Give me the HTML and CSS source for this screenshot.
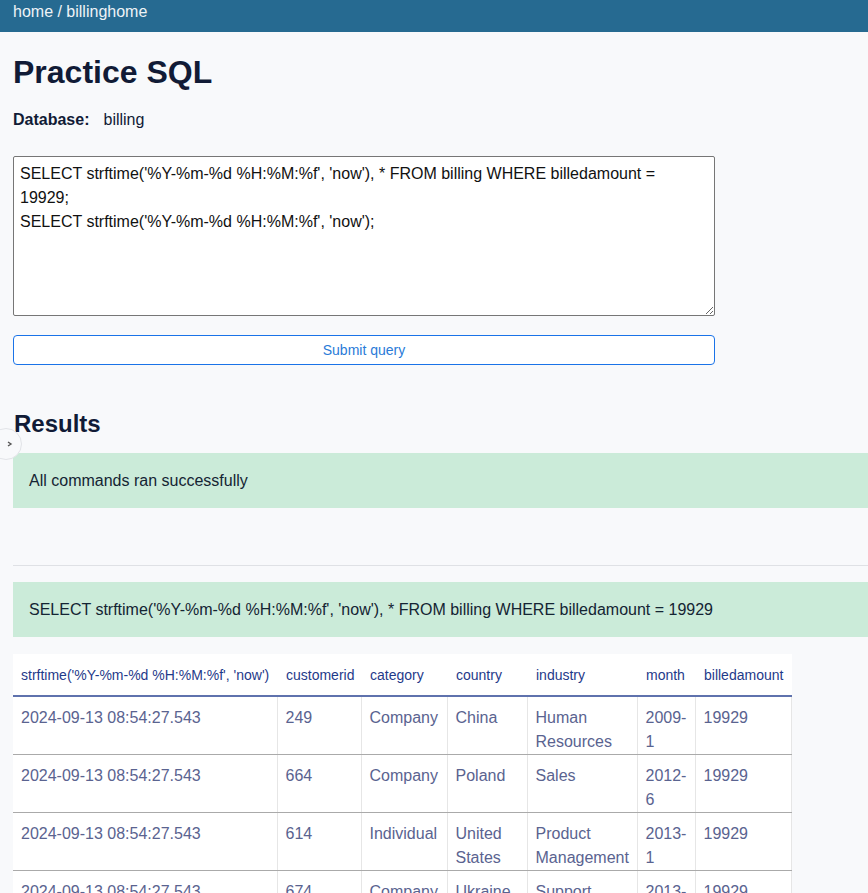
FILE: index.html
```html
<!DOCTYPE html>
<html>
<head>
<meta charset="utf-8">
<link rel="stylesheet" href="styles.css">
</head>
<body>
<div class="topbar">home / billinghome</div>
<button class="side-toggle" aria-label="toggle">
<svg width="6" height="6" viewBox="0 0 6 6"><path d="M1 1 L4 3 L1 5" fill="none" stroke="#555" stroke-width="1.4"/></svg>
</button>
<main class="main">
<h1 class="title">Practice SQL</h1>
<div class="dbline"><span class="dblabel">Database:</span><span class="dbname">billing</span></div>
<textarea class="editor">SELECT strftime('%Y-%m-%d %H:%M:%f', 'now'), * FROM billing WHERE billedamount = 19929;
SELECT strftime('%Y-%m-%d %H:%M:%f', 'now');</textarea>
<button class="submit">Submit query</button>
<h2 class="results">Results</h2>
<div class="alert">All commands ran successfully</div>
<hr class="sep">
<div class="alert">SELECT strftime('%Y-%m-%d %H:%M:%f', 'now'), * FROM billing WHERE billedamount = 19929</div>
<table class="grid">
<colgroup>
<col class="c1"><col class="c2"><col class="c3"><col class="c4"><col class="c5"><col class="c6"><col class="c7">
</colgroup>
<thead>
<tr><th>strftime('%Y-%m-%d %H:%M:%f', 'now')</th><th>customerid</th><th>category</th><th>country</th><th>industry</th><th>month</th><th>billedamount</th></tr>
</thead>
<tbody>
<tr><td>2024-09-13 08:54:27.543</td><td>249</td><td>Company</td><td>China</td><td>Human Resources</td><td>2009-1</td><td>19929</td></tr>
<tr><td>2024-09-13 08:54:27.543</td><td>664</td><td>Company</td><td>Poland</td><td>Sales</td><td>2012-6</td><td>19929</td></tr>
<tr><td>2024-09-13 08:54:27.543</td><td>614</td><td>Individual</td><td>United States</td><td>Product Management</td><td>2013-1</td><td>19929</td></tr>
<tr><td>2024-09-13 08:54:27.543</td><td>674</td><td>Company</td><td>Ukraine</td><td>Support</td><td>2013-4</td><td>19929</td></tr>
</tbody>
</table>
</main>
</body>
</html>
```
FILE: styles.css
```css
html, body {
  margin: 0;
  padding: 0;
}
body {
  background: #f8f9fb;
  font-family: "Liberation Sans", Arial, sans-serif;
  color: #111b36;
  overflow: hidden;
}
.topbar {
  height: 32px;
  background: #266a91;
  color: #eef3f7;
  font-size: 16px;
  line-height: 24px;
  padding-left: 13px;
  box-sizing: border-box;
}
.side-toggle {
  position: absolute;
  left: -10px;
  top: 428px;
  width: 32px;
  height: 32px;
  border-radius: 50%;
  border: 1px solid #e2e4e8;
  background: #f8f9fb;
  padding: 0 0 0 8px;
  display: flex;
  align-items: center;
  justify-content: center;
}
.main {
  padding-left: 13px;
}
.title {
  margin: 0;
  padding-top: 20px;
  font-size: 32px;
  line-height: 40px;
  font-weight: bold;
  color: #111b36;
}
.dbline {
  margin-top: 16px;
  font-size: 16px;
  line-height: 24px;
}
.dblabel {
  font-weight: bold;
  margin-right: 14px;
}
.editor {
  display: block;
  margin-top: 24px;
  width: 702px;
  height: 160px;
  box-sizing: border-box;
  border: 1px solid #767676;
  border-radius: 2px;
  padding: 5px 6px;
  font-family: "Liberation Sans", Arial, sans-serif;
  font-size: 16px;
  line-height: 24px;
  color: #111;
  background: #fff;
  resize: vertical;
}
.submit {
  display: block;
  margin-top: 19px;
  width: 702px;
  height: 30px;
  border: 1px solid #1a73e8;
  border-radius: 4px;
  background: #fff;
  color: #2a7bd8;
  font-family: "Liberation Sans", Arial, sans-serif;
  font-size: 14px;
}
.results {
  margin: 44px 0 0 1px;
  font-size: 24px;
  line-height: 30px;
  font-weight: bold;
  color: #111b36;
}
.alert {
  margin-top: 14px;
  background: #cbebd9;
  height: 55px;
  box-sizing: border-box;
  padding: 16px 16px;
  font-size: 16px;
  line-height: 23px;
  color: #142433;
  white-space: nowrap;
}
.sep {
  margin: 57px 0 0 0;
  border: 0;
  border-top: 1px solid #dfe1e5;
  height: 0;
}
.sep + .alert {
  margin-top: 16px;
}
.grid {
  margin-top: 17px;
  border-collapse: collapse;
  background: #fff;
  table-layout: fixed;
  width: 778px;
}
.c1 { width: 264px; }
.c2 { width: 84px; }
.c3 { width: 86px; }
.c4 { width: 80px; }
.c5 { width: 110px; }
.c6 { width: 58px; }
.c7 { width: 96px; }
.grid th {
  height: 41px;
  padding: 0 8px 0 9px;
  text-align: left;
  font-weight: normal;
  font-size: 14px;
  color: #1f3a8a;
  border-bottom: 2px solid #5f72ad;
  white-space: nowrap;
  vertical-align: middle;
}
.grid th:first-child {
  padding-left: 8px;
}
.grid td {
  padding: 9px 8px 0 8px;
  height: 48px;
  vertical-align: top;
  font-size: 16px;
  line-height: 24px;
  color: #5a6390;
  border-bottom: 1px solid #aaaaaa;
  border-left: 1px solid #e6e6e6;
  border-right: 1px solid #e6e6e6;
}
.grid td:first-child {
  border-left: 0;
}
```
